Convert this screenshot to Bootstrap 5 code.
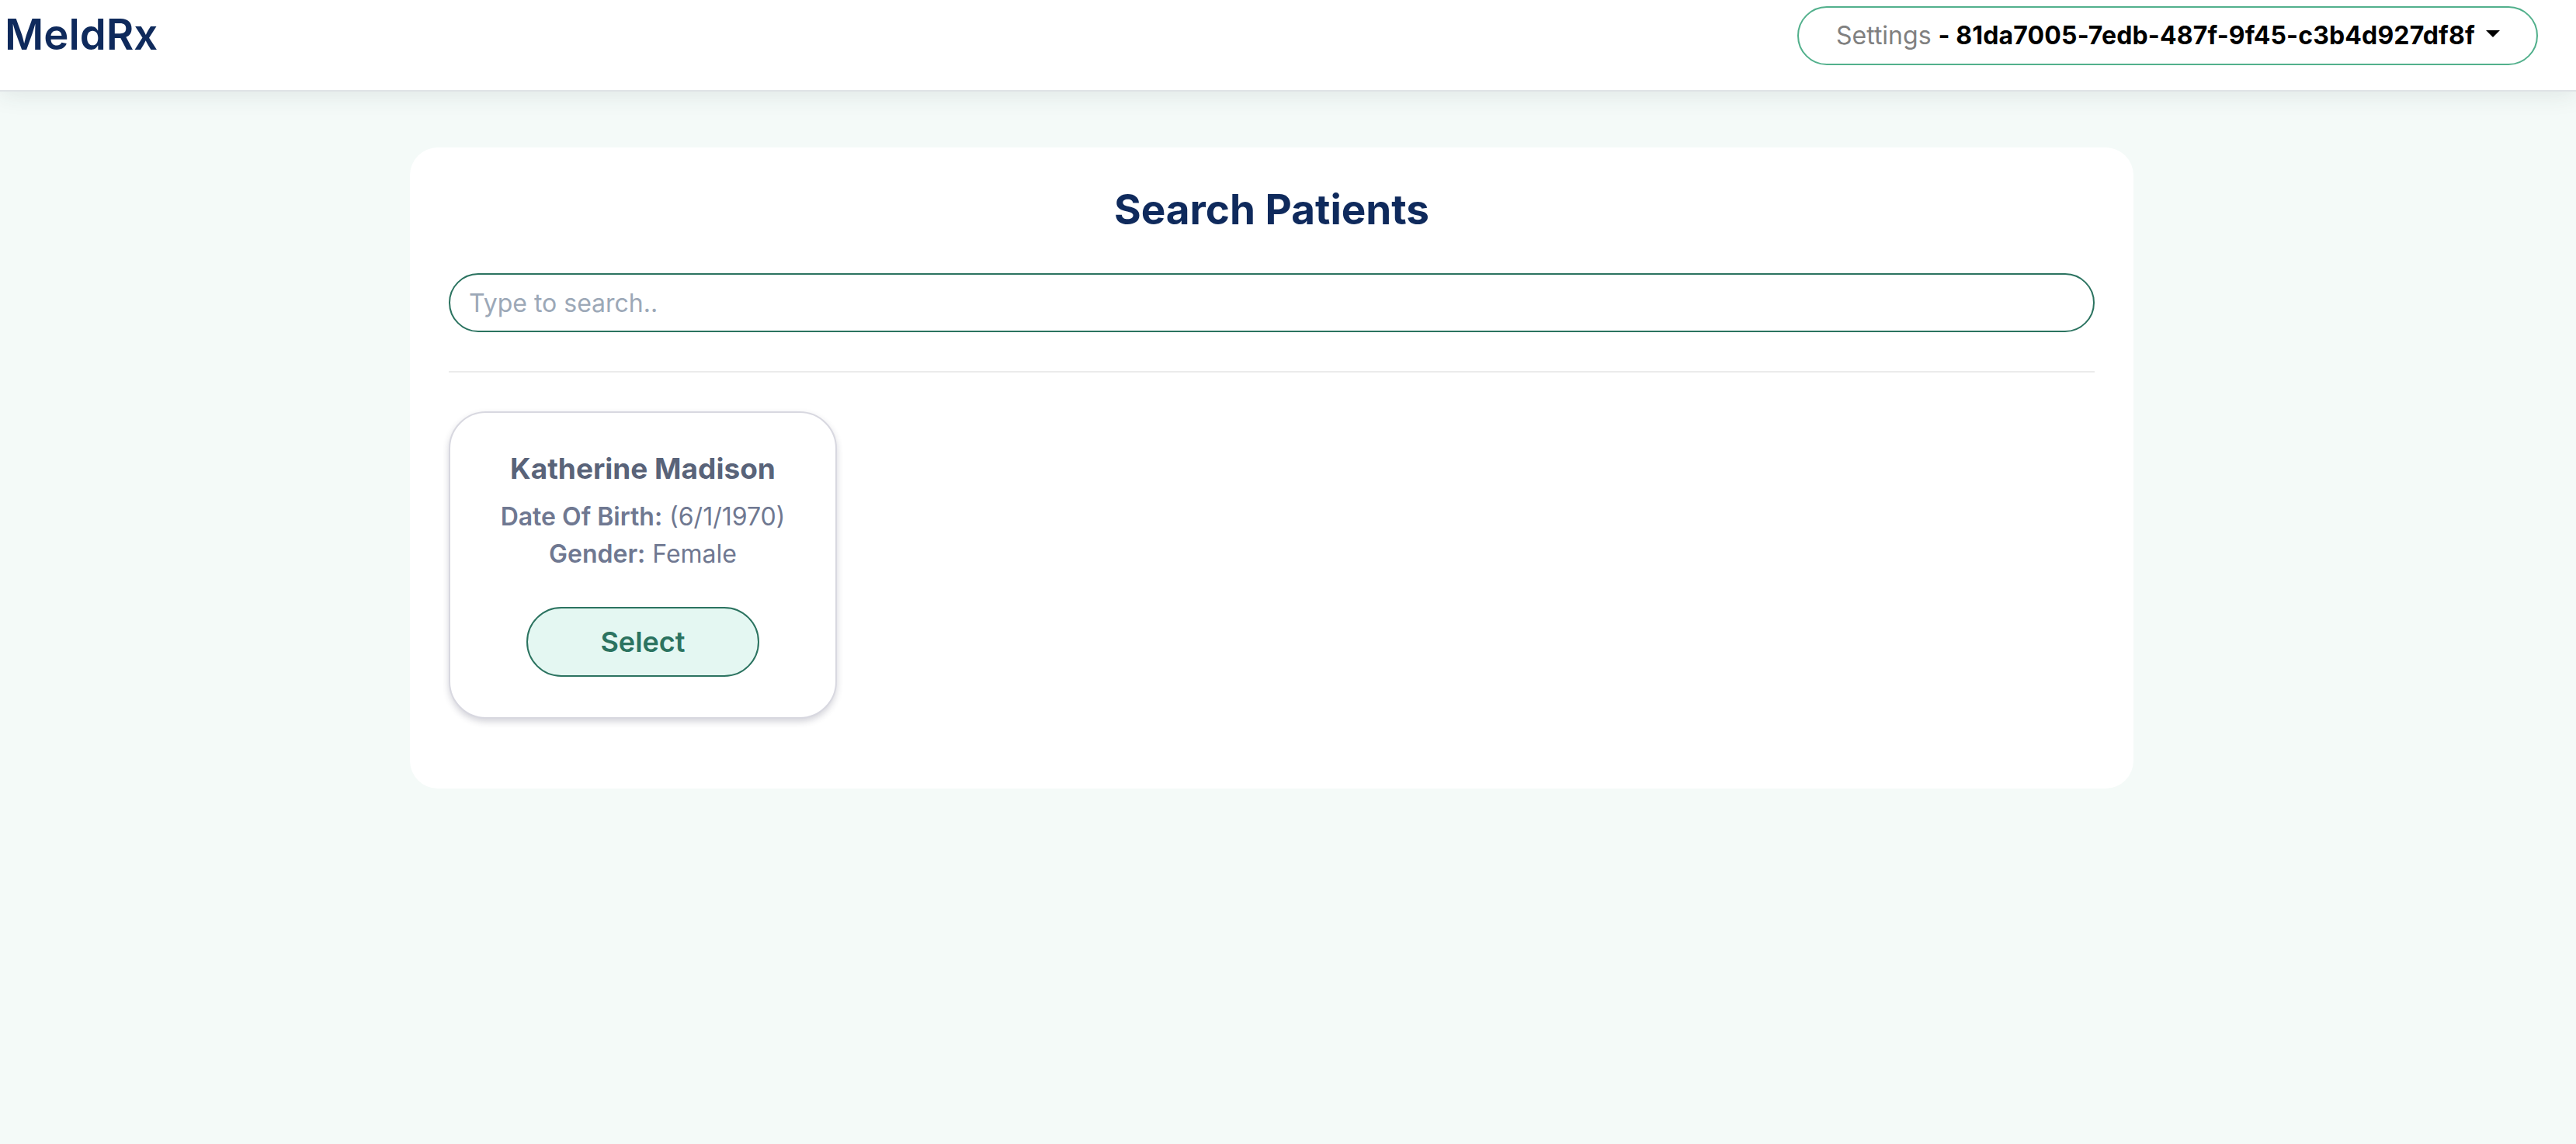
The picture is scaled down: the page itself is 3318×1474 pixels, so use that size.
<!DOCTYPE html>
<html lang="en">
<head>
    <meta charset="UTF-8">
    <meta name="viewport" content="width=device-width, initial-scale=1.0">
    <title>MeldRx</title>
    <link href="https://cdn.jsdelivr.net/npm/bootstrap@5.3.0/dist/css/bootstrap.min.css" rel="stylesheet">

    <style>
        body {
            min-height: 1474px;
            background: #f4faf8;
            font-family: "Inter", "Liberation Sans", sans-serif;
        }
        .top-bar {
            height: 118px;
            padding: 8px 49px 0 6px;
            align-items: flex-start;
            background: #fff;
            border-bottom: 2px solid #dfe3e6;
            box-shadow: 0 4px 28px rgba(40, 60, 60, .1);
        }
        .brand-name {
            padding: 0;
            margin: 0;
            font-size: 54.5px;
            line-height: 72px;
            font-weight: 600;
            color: #0f2a5c;
        }
        .settings-btn {
            width: 954px;
            height: 76px;
            padding: 0 32px 0 48px;
            display: flex;
            align-items: center;
            background: #fff;
            border: 2px solid #52b08c;
            border-radius: 38px;
            font-size: 32px;
            color: #808080;
        }
        .settings-btn b { color: #000; font-weight: 700; letter-spacing: .15px; }
        .settings-btn::after {
            margin-left: 14px;
            margin-bottom: 6px;
            border-top-width: 9px;
            border-right-width: 9px;
            border-left-width: 9px;
            color: #000;
        }
        .search-panel {
            width: 2220px;
            height: 826px;
            margin: 72px 0 0 528px;
            padding: 50px 50px 0;
            background: #fff;
            border-radius: 36px;
        }
        .panel-title {
            margin: 0 0 52px;
            font-size: 53px;
            line-height: 60px;
            font-weight: 700;
            text-align: center;
            color: #0f2a5c;
        }
        .search-input {
            height: 76px;
            padding: 0 24px;
            border: 2px solid #2b7360;
            border-radius: 38px;
            font-size: 32px;
        }
        .search-input::placeholder { color: #9ca8b7; }
        .panel-rule {
            margin: 50px 0;
            border: 0;
            border-top: 2px solid #ebebeb;
            opacity: 1;
        }
        .patient-card {
            width: 500px;
            height: 396px;
            padding: 50px 20px 0;
            align-items: center;
            border: 2px solid #d8d8e0;
            border-radius: 48px;
            box-shadow: 0 4px 8px rgba(40, 40, 70, .2);
            color: #6f7891;
            font-size: 32px;
            line-height: 48px;
        }
        .patient-name {
            margin: 0 0 16px;
            font-size: 37px;
            line-height: 44px;
            font-weight: 700;
            color: #596379;
        }
        .patient-card b { font-weight: 600; }
        .select-btn {
            width: 300px;
            height: 90px;
            margin-top: 44px;
            background: #e4f7f2;
            border: 2px solid #2b7360;
            border-radius: 45px;
            font-size: 36px;
            font-weight: 600;
            color: #2b7360;
        }
    </style>
</head>
<body>

    <!-- Barra in alto -->
    <nav class="navbar top-bar">
        <a class="navbar-brand brand-name" href="#">MeldRx</a>
        <div class="dropdown">
            <button class="btn dropdown-toggle settings-btn" type="button" data-bs-toggle="dropdown">
                <span>Settings <b>- 81da7005-7edb-487f-9f45-c3b4d927df8f</b></span>
            </button>
            <ul class="dropdown-menu dropdown-menu-end">
                <li><a class="dropdown-item" href="#">Settings</a></li>
            </ul>
        </div>
    </nav>

    <!-- Ricerca pazienti -->
    <main class="search-panel">
        <h2 class="panel-title">Search Patients</h2>
        <input class="form-control search-input" type="text" placeholder="Type to search..">
        <hr class="panel-rule">
        <div class="card patient-card">
            <h5 class="patient-name">Katherine Madison</h5>
            <div><b>Date Of Birth:</b> (6/1/1970)</div>
            <div><b>Gender:</b> Female</div>
            <button class="btn select-btn" type="button">Select</button>
        </div>
    </main>

    <script src="https://cdn.jsdelivr.net/npm/bootstrap@5.3.0/dist/js/bootstrap.bundle.min.js"></script>

</body>
</html>
